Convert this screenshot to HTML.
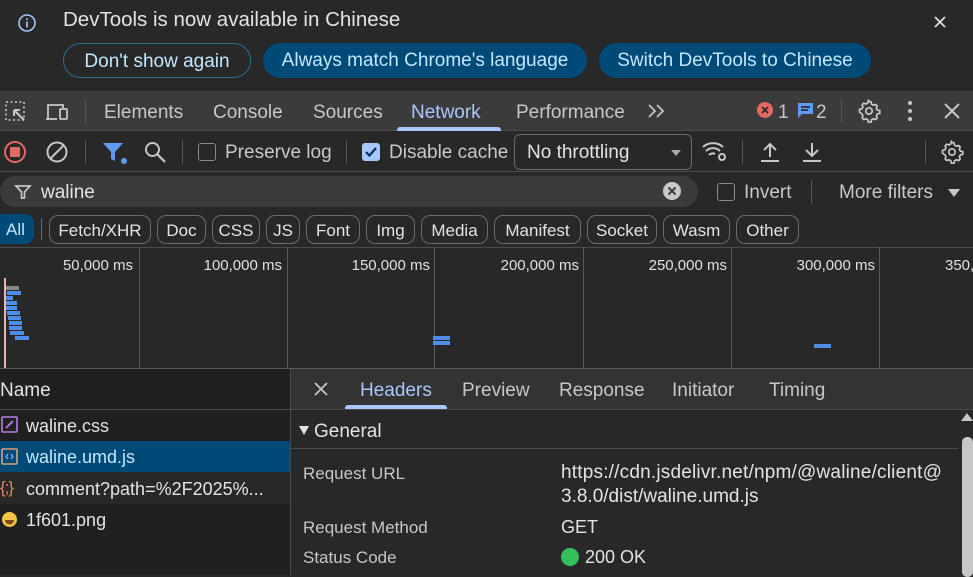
<!DOCTYPE html>
<html><head><meta charset="utf-8"><style>
*{box-sizing:border-box;margin:0;padding:0}
body{width:973px;height:575px;overflow:hidden;background:#282828;font-family:"Liberation Sans",sans-serif;color:#e3e3e3;position:relative}
.a{position:absolute;white-space:nowrap}
.t{font-size:19px;margin-top:2px}
.chip{position:absolute;top:215px;height:29px;border:1px solid #6b6b6b;border-radius:9px;font-size:17px;line-height:29px;text-align:center;color:#e3e3e3}
.vl{position:absolute;width:1px;background:#555}
.g{position:absolute;top:247px;height:121px;width:1px;background:#5a5a5a}
.ms{position:absolute;top:257px;font-size:15px;color:#e0e0e0}
.bar{position:absolute;height:4px;background:#4c8ee8}
.f{font-size:18px;margin-top:1px}
</style></head><body>
<!-- banner -->
<svg class="a" style="left:16px;top:12px" width="22" height="22" viewBox="0 0 22 22"><circle cx="11" cy="11" r="8" fill="none" stroke="#a8c7fa" stroke-width="1.6"/><rect x="10.2" y="9.5" width="1.6" height="6" fill="#a8c7fa"/><rect x="10.2" y="6.3" width="1.6" height="1.7" fill="#a8c7fa"/></svg>
<div class="a" style="left:63px;top:8px;font-size:20.5px;color:#e3e3e3">DevTools is now available in Chinese</div>
<svg class="a" style="left:932px;top:14px" width="16" height="16"><path d="M3 3L13 13M13 3L3 13" stroke="#ddd" stroke-width="1.8"/></svg>
<div class="a" style="left:63px;top:43px;width:188px;height:35px;border:1px solid #2a6f95;border-radius:18px;font-size:19px;line-height:35px;text-align:center;color:#c2e7ff">Don't show again</div>
<div class="a" style="left:263px;top:43px;width:324px;height:35px;background:#004a77;border-radius:18px;font-size:19px;line-height:36px;text-align:center;color:#c2e7ff">Always match Chrome's language</div>
<div class="a" style="left:599px;top:43px;width:272px;height:35px;background:#004a77;border-radius:18px;font-size:19px;line-height:36px;text-align:center;color:#c2e7ff">Switch DevTools to Chinese</div>
<!-- tab bar -->
<div class="a" style="left:0;top:91px;width:973px;height:40px;background:#3b3b3b;border-bottom:1px solid #4a4a4a"></div>
<svg class="a" style="left:4px;top:100px" width="24" height="24"><rect x="2" y="2" width="18" height="18" fill="none" stroke="#c7c7c7" stroke-width="1.6" stroke-dasharray="2 2.5"/><path d="M10 10L20 20M10 10h6M10 10v6" stroke="#c7c7c7" stroke-width="2" fill="none"/></svg>
<svg class="a" style="left:45px;top:100px" width="26" height="24"><path d="M3 19V5h15v3" fill="none" stroke="#c7c7c7" stroke-width="1.8"/><path d="M1 19h11" stroke="#c7c7c7" stroke-width="1.8"/><rect x="15" y="9" width="7" height="10" rx="1" fill="none" stroke="#c7c7c7" stroke-width="1.8"/></svg>
<div class="vl" style="left:85px;top:99px;height:24px"></div>
<div class="a t" style="left:104px;top:100px;color:#c7c7c7">Elements</div>
<div class="a t" style="left:213px;top:100px;color:#c7c7c7">Console</div>
<div class="a t" style="left:313px;top:100px;color:#c7c7c7">Sources</div>
<div class="a t" style="left:411px;top:100px;color:#a8c7fa">Network</div>
<div class="a" style="left:397px;top:127px;width:104px;height:4px;background:#a8c7fa;border-radius:3px 3px 0 0"></div>
<div class="a t" style="left:516px;top:100px;color:#c7c7c7">Performance</div>
<svg class="a" style="left:647px;top:103px" width="20" height="16"><path d="M2 2l6 6-6 6M10 2l6 6-6 6" fill="none" stroke="#c7c7c7" stroke-width="1.8"/></svg>
<svg class="a" style="left:756px;top:101px" width="18" height="18"><circle cx="9" cy="9" r="8" fill="#e46962"/><path d="M6 6l6 6M12 6l-6 6" stroke="#282828" stroke-width="1.8"/></svg>
<div class="a t" style="left:778px;top:100px;color:#c7c7c7">1</div>
<svg class="a" style="left:797px;top:102px" width="18" height="18"><path d="M1 1h15v11H5l-4 4z" fill="#5e9bf0"/><path d="M4 5h9M4 8h7" stroke="#1b1b1b" stroke-width="1.4"/></svg>
<div class="a t" style="left:816px;top:100px;color:#c7c7c7">2</div>
<div class="vl" style="left:841px;top:99px;height:24px"></div>
<svg class="a" style="left:857px;top:99px" width="24" height="24" viewBox="0 0 24 24"><path d="M12 2.5l2 .3.6 2.4 1.7 1 2.4-.7 1.4 1.5-.7 2.4 1 1.7 2.4.6v2.6l-2.4.6-1 1.7.7 2.4-1.4 1.5-2.4-.7-1.7 1-.6 2.4h-2.6l-.6-2.4-1.7-1-2.4.7-1.5-1.5.7-2.4-1-1.7L2.5 13v-2.6l2.4-.6 1-1.7-.7-2.4L6.7 4.2l2.4.7 1.7-1 .6-2.4z" fill="none" stroke="#c7c7c7" stroke-width="1.7"/><circle cx="12" cy="12" r="3.2" fill="none" stroke="#c7c7c7" stroke-width="1.7"/></svg>
<svg class="a" style="left:904px;top:100px" width="12" height="22"><circle cx="6" cy="3" r="2" fill="#c7c7c7"/><circle cx="6" cy="11" r="2" fill="#c7c7c7"/><circle cx="6" cy="19" r="2" fill="#c7c7c7"/></svg>
<svg class="a" style="left:943px;top:102px" width="18" height="18"><path d="M2 2L16 16M16 2L2 16" stroke="#c7c7c7" stroke-width="2"/></svg>
<!-- toolbar -->
<div class="a" style="left:0;top:171px;width:973px;height:1px;background:#4a4a4a"></div>
<svg class="a" style="left:3px;top:140px" width="24" height="24"><circle cx="12" cy="12" r="10" fill="none" stroke="#e46962" stroke-width="2"/><rect x="7" y="7" width="10" height="10" rx="1" fill="#e46962"/></svg>
<svg class="a" style="left:45px;top:140px" width="24" height="24"><circle cx="12" cy="12" r="9.5" fill="none" stroke="#c7c7c7" stroke-width="2"/><path d="M5.5 18.5L18.5 5.5" stroke="#c7c7c7" stroke-width="2"/></svg>
<div class="vl" style="left:85px;top:140px;height:24px"></div>
<svg class="a" style="left:102px;top:141px" width="26" height="24"><path d="M1 2h20l-8 9v9l-4-2v-7z" fill="#5e9bf0"/><circle cx="22" cy="20" r="3" fill="#5e9bf0"/></svg>
<svg class="a" style="left:143px;top:140px" width="24" height="24"><circle cx="9.5" cy="9.5" r="6.5" fill="none" stroke="#c7c7c7" stroke-width="2"/><path d="M14.5 14.5L22 22" stroke="#c7c7c7" stroke-width="2.2"/></svg>
<div class="vl" style="left:182px;top:140px;height:24px"></div>
<div class="a" style="left:198px;top:143px;width:18px;height:18px;border:1.5px solid #8a8a8a;border-radius:3px"></div>
<div class="a t" style="left:225px;top:140px;color:#c7c7c7">Preserve log</div>
<div class="vl" style="left:346px;top:140px;height:24px"></div>
<svg class="a" style="left:362px;top:143px" width="18" height="18"><rect width="18" height="18" rx="3" fill="#a8c7fa"/><path d="M4 9l3.5 3.5L14 5" fill="none" stroke="#062e6f" stroke-width="2.2"/></svg>
<div class="a t" style="left:389px;top:140px;color:#c7c7c7">Disable cache</div>
<div class="a" style="left:514px;top:134px;width:178px;height:36px;border:1px solid #6b6b6b;border-radius:6px"></div>
<div class="a t" style="left:527px;top:140px;color:#e3e3e3">No throttling</div>
<div class="a" style="left:671px;top:150px;width:0;height:0;border-left:5px solid transparent;border-right:5px solid transparent;border-top:6px solid #aaa"></div>
<svg class="a" style="left:701px;top:139px" width="28" height="24"><path d="M2 8a15 15 0 0 1 20 0M5 12a10 10 0 0 1 14 0M8 16a5 5 0 0 1 6-1" fill="none" stroke="#c7c7c7" stroke-width="2"/><circle cx="21" cy="18" r="3" fill="none" stroke="#c7c7c7" stroke-width="2"/></svg>
<div class="vl" style="left:742px;top:140px;height:24px"></div>
<svg class="a" style="left:759px;top:140px" width="22" height="24"><path d="M11 17V4M5 10l6-6 6 6M2 21h18" fill="none" stroke="#c7c7c7" stroke-width="2"/></svg>
<svg class="a" style="left:801px;top:140px" width="22" height="24"><path d="M11 3v13M5 10l6 6 6-6M2 21h18" fill="none" stroke="#c7c7c7" stroke-width="2"/></svg>
<div class="vl" style="left:925px;top:140px;height:24px"></div>
<svg class="a" style="left:940px;top:140px" width="24" height="24" viewBox="0 0 24 24"><path d="M12 2.5l2 .3.6 2.4 1.7 1 2.4-.7 1.4 1.5-.7 2.4 1 1.7 2.4.6v2.6l-2.4.6-1 1.7.7 2.4-1.4 1.5-2.4-.7-1.7 1-.6 2.4h-2.6l-.6-2.4-1.7-1-2.4.7-1.5-1.5.7-2.4-1-1.7L2.5 13v-2.6l2.4-.6 1-1.7-.7-2.4L6.7 4.2l2.4.7 1.7-1 .6-2.4z" fill="none" stroke="#c7c7c7" stroke-width="1.7"/><circle cx="12" cy="12" r="3.2" fill="none" stroke="#c7c7c7" stroke-width="1.7"/></svg>
<!-- filter row -->
<div class="a" style="left:0;top:176px;width:698px;height:31px;background:#3b3b3b;border-radius:16px"></div>
<svg class="a" style="left:14px;top:183px" width="18" height="18"><path d="M2 3h14l-5.5 6v6h-3V9z" fill="none" stroke="#c7c7c7" stroke-width="1.7"/></svg>
<div class="a t" style="left:41px;top:180px;color:#e3e3e3">waline</div>
<svg class="a" style="left:662px;top:181px" width="20" height="20"><circle cx="10" cy="10" r="9" fill="#c7c7c7"/><path d="M6.5 6.5l7 7M13.5 6.5l-7 7" stroke="#3b3b3b" stroke-width="2"/></svg>
<div class="a" style="left:717px;top:183px;width:18px;height:18px;border:1.5px solid #8a8a8a;border-radius:3px"></div>
<div class="a t" style="left:744px;top:180px;color:#c7c7c7">Invert</div>
<div class="vl" style="left:811px;top:180px;height:24px"></div>
<div class="a t" style="left:839px;top:180px;color:#c7c7c7">More filters</div>
<div class="a" style="left:948px;top:189px;border-left:6px solid transparent;border-right:6px solid transparent;border-top:8px solid #c7c7c7"></div>
<!-- chips -->
<div class="a" style="left:0;top:214px;width:34px;height:30px;background:#004a77;border-radius:0 9px 9px 0;font-size:17px;line-height:31px;padding-left:6px;color:#c2e7ff">All</div>
<div class="vl" style="left:41px;top:218px;height:22px;background:#6b6b6b"></div>
<div class="chip" style="left:49px;width:102px">Fetch/XHR</div>
<div class="chip" style="left:157px;width:49px">Doc</div>
<div class="chip" style="left:212px;width:48px">CSS</div>
<div class="chip" style="left:266px;width:34px">JS</div>
<div class="chip" style="left:306px;width:54px">Font</div>
<div class="chip" style="left:366px;width:49px">Img</div>
<div class="chip" style="left:421px;width:67px">Media</div>
<div class="chip" style="left:494px;width:87px">Manifest</div>
<div class="chip" style="left:587px;width:70px">Socket</div>
<div class="chip" style="left:663px;width:67px">Wasm</div>
<div class="chip" style="left:736px;width:63px">Other</div>
<!-- timeline -->
<div class="a" style="left:0;top:247px;width:973px;height:1px;background:#4a4a4a"></div>
<div class="g" style="left:139px"></div><div class="g" style="left:287px"></div><div class="g" style="left:434px"></div><div class="g" style="left:583px"></div><div class="g" style="left:731px"></div><div class="g" style="left:879px"></div>
<div class="ms" style="right:840px">50,000 ms</div>
<div class="ms" style="right:691px">100,000 ms</div>
<div class="ms" style="right:543px">150,000 ms</div>
<div class="ms" style="right:394px">200,000 ms</div>
<div class="ms" style="right:246px">250,000 ms</div>
<div class="ms" style="right:98px">300,000 ms</div>
<div class="ms" style="left:945px">350,</div>
<div class="a" style="left:4px;top:278px;width:2px;height:90px;background:#e8b4b8"></div>
<div class="bar" style="left:6px;top:286px;width:13px;background:#888"></div>
<div class="bar" style="left:7px;top:291px;width:14px"></div>
<div class="bar" style="left:6px;top:296px;width:7px"></div>
<div class="bar" style="left:6px;top:301px;width:11px"></div>
<div class="bar" style="left:6px;top:306px;width:11px"></div>
<div class="bar" style="left:7px;top:311px;width:13px"></div>
<div class="bar" style="left:8px;top:316px;width:13px"></div>
<div class="bar" style="left:9px;top:321px;width:13px"></div>
<div class="bar" style="left:9px;top:326px;width:13px"></div>
<div class="bar" style="left:10px;top:331px;width:14px"></div>
<div class="bar" style="left:15px;top:336px;width:14px"></div>
<div class="bar" style="left:433px;top:336px;width:17px"></div>
<div class="bar" style="left:433px;top:341px;width:17px"></div>
<div class="bar" style="left:814px;top:344px;width:17px"></div>
<!-- bottom -->
<div class="a" style="left:0;top:368px;width:973px;height:1px;background:#5a5a5a"></div>
<div class="a" style="left:0;top:369px;width:290px;height:206px;background:#202020"></div>
<div class="a" style="left:0;top:409px;width:290px;height:1px;background:#4a4a4a"></div>
<div class="a t" style="left:0;top:378px;color:#e3e3e3">Name</div>
<svg class="a" style="left:1px;top:416px" width="17" height="17"><rect x="1" y="1" width="15" height="15" rx="1" fill="none" stroke="#b57ee5" stroke-width="1.6"/><path d="M5 12l7-7" stroke="#b57ee5" stroke-width="1.8"/></svg>
<div class="a f" style="left:26px;top:415px">waline.css</div>
<div class="a" style="left:0;top:441px;width:290px;height:31px;background:#004a77"></div>
<svg class="a" style="left:1px;top:448px" width="17" height="17"><rect x="1" y="1" width="15" height="15" rx="1" fill="none" stroke="#d8a27a" stroke-width="1.6"/><path d="M7 6l-2 2.5 2 2.5M10 6l2 2.5-2 2.5" fill="none" stroke="#8ab4f8" stroke-width="1.3"/></svg>
<div class="a f" style="left:26px;top:446px;color:#c2e7ff">waline.umd.js</div>
<div class="a" style="left:0;top:472px;width:290px;height:32px;background:#282828"></div>
<div class="a" style="left:0;top:478px;font-size:17px;color:#e8865a;letter-spacing:-1px">{;}</div>
<div class="a f" style="left:26px;top:478px">comment?path=%2F2025%...</div>
<svg class="a" style="left:1px;top:511px" width="17" height="17"><circle cx="8.5" cy="8.5" r="7.5" fill="#f6c445"/><path d="M4 9h9a4.5 4.5 0 0 1-9 0z" fill="#7a4a10"/></svg>
<div class="a f" style="left:26px;top:509px">1f601.png</div>
<div class="a" style="left:290px;top:369px;width:1px;height:206px;background:#4a4a4a"></div>
<div class="a" style="left:291px;top:369px;width:682px;height:40px;background:#333"></div>
<div class="a" style="left:291px;top:409px;width:682px;height:1px;background:#4a4a4a"></div>
<svg class="a" style="left:313px;top:381px" width="16" height="16"><path d="M2 2L14 14M14 2L2 14" stroke="#c7c7c7" stroke-width="1.8"/></svg>
<div class="a t" style="left:360px;top:378px;color:#a8c7fa">Headers</div>
<div class="a" style="left:345px;top:405px;width:102px;height:4px;background:#a8c7fa;border-radius:3px 3px 0 0"></div>
<div class="a t" style="left:462px;top:378px;color:#c7c7c7">Preview</div>
<div class="a t" style="left:559px;top:378px;color:#c7c7c7">Response</div>
<div class="a t" style="left:672px;top:378px;color:#c7c7c7">Initiator</div>
<div class="a t" style="left:769px;top:378px;color:#c7c7c7">Timing</div>
<div class="a" style="left:291px;top:448px;width:667px;height:1px;background:#4a4a4a"></div>
<div class="a" style="left:299px;top:426px;border-left:5px solid transparent;border-right:5px solid transparent;border-top:9px solid #e3e3e3"></div>
<div class="a t" style="left:314px;top:419px;color:#e3e3e3">General</div>
<div class="a" style="left:303px;top:464px;font-size:17px;color:#c7c7c7">Request URL</div>
<div class="a" style="left:561px;top:462px;font-size:19px;letter-spacing:0.2px;color:#e3e3e3">https://cdn.jsdelivr.net/npm/@waline/client@</div>
<div class="a" style="left:561px;top:486px;font-size:19px;color:#e3e3e3">3.8.0/dist/waline.umd.js</div>
<div class="a" style="left:303px;top:518px;font-size:17px;color:#c7c7c7">Request Method</div>
<div class="a" style="left:561px;top:517px;font-size:18px;color:#e3e3e3">GET</div>
<div class="a" style="left:303px;top:548px;font-size:17px;color:#c7c7c7">Status Code</div>
<div class="a" style="left:561px;top:548px;width:18px;height:18px;border-radius:50%;background:#34c15d"></div>
<div class="a" style="left:585px;top:547px;font-size:18px;color:#e3e3e3">200 OK</div>
<div class="a" style="left:961px;top:413px;border-left:6px solid transparent;border-right:6px solid transparent;border-bottom:8px solid #c7c7c7"></div>
<div class="a" style="left:962px;top:437px;width:11px;height:140px;background:#c7c7c7;border-radius:5px"></div>
</body></html>
